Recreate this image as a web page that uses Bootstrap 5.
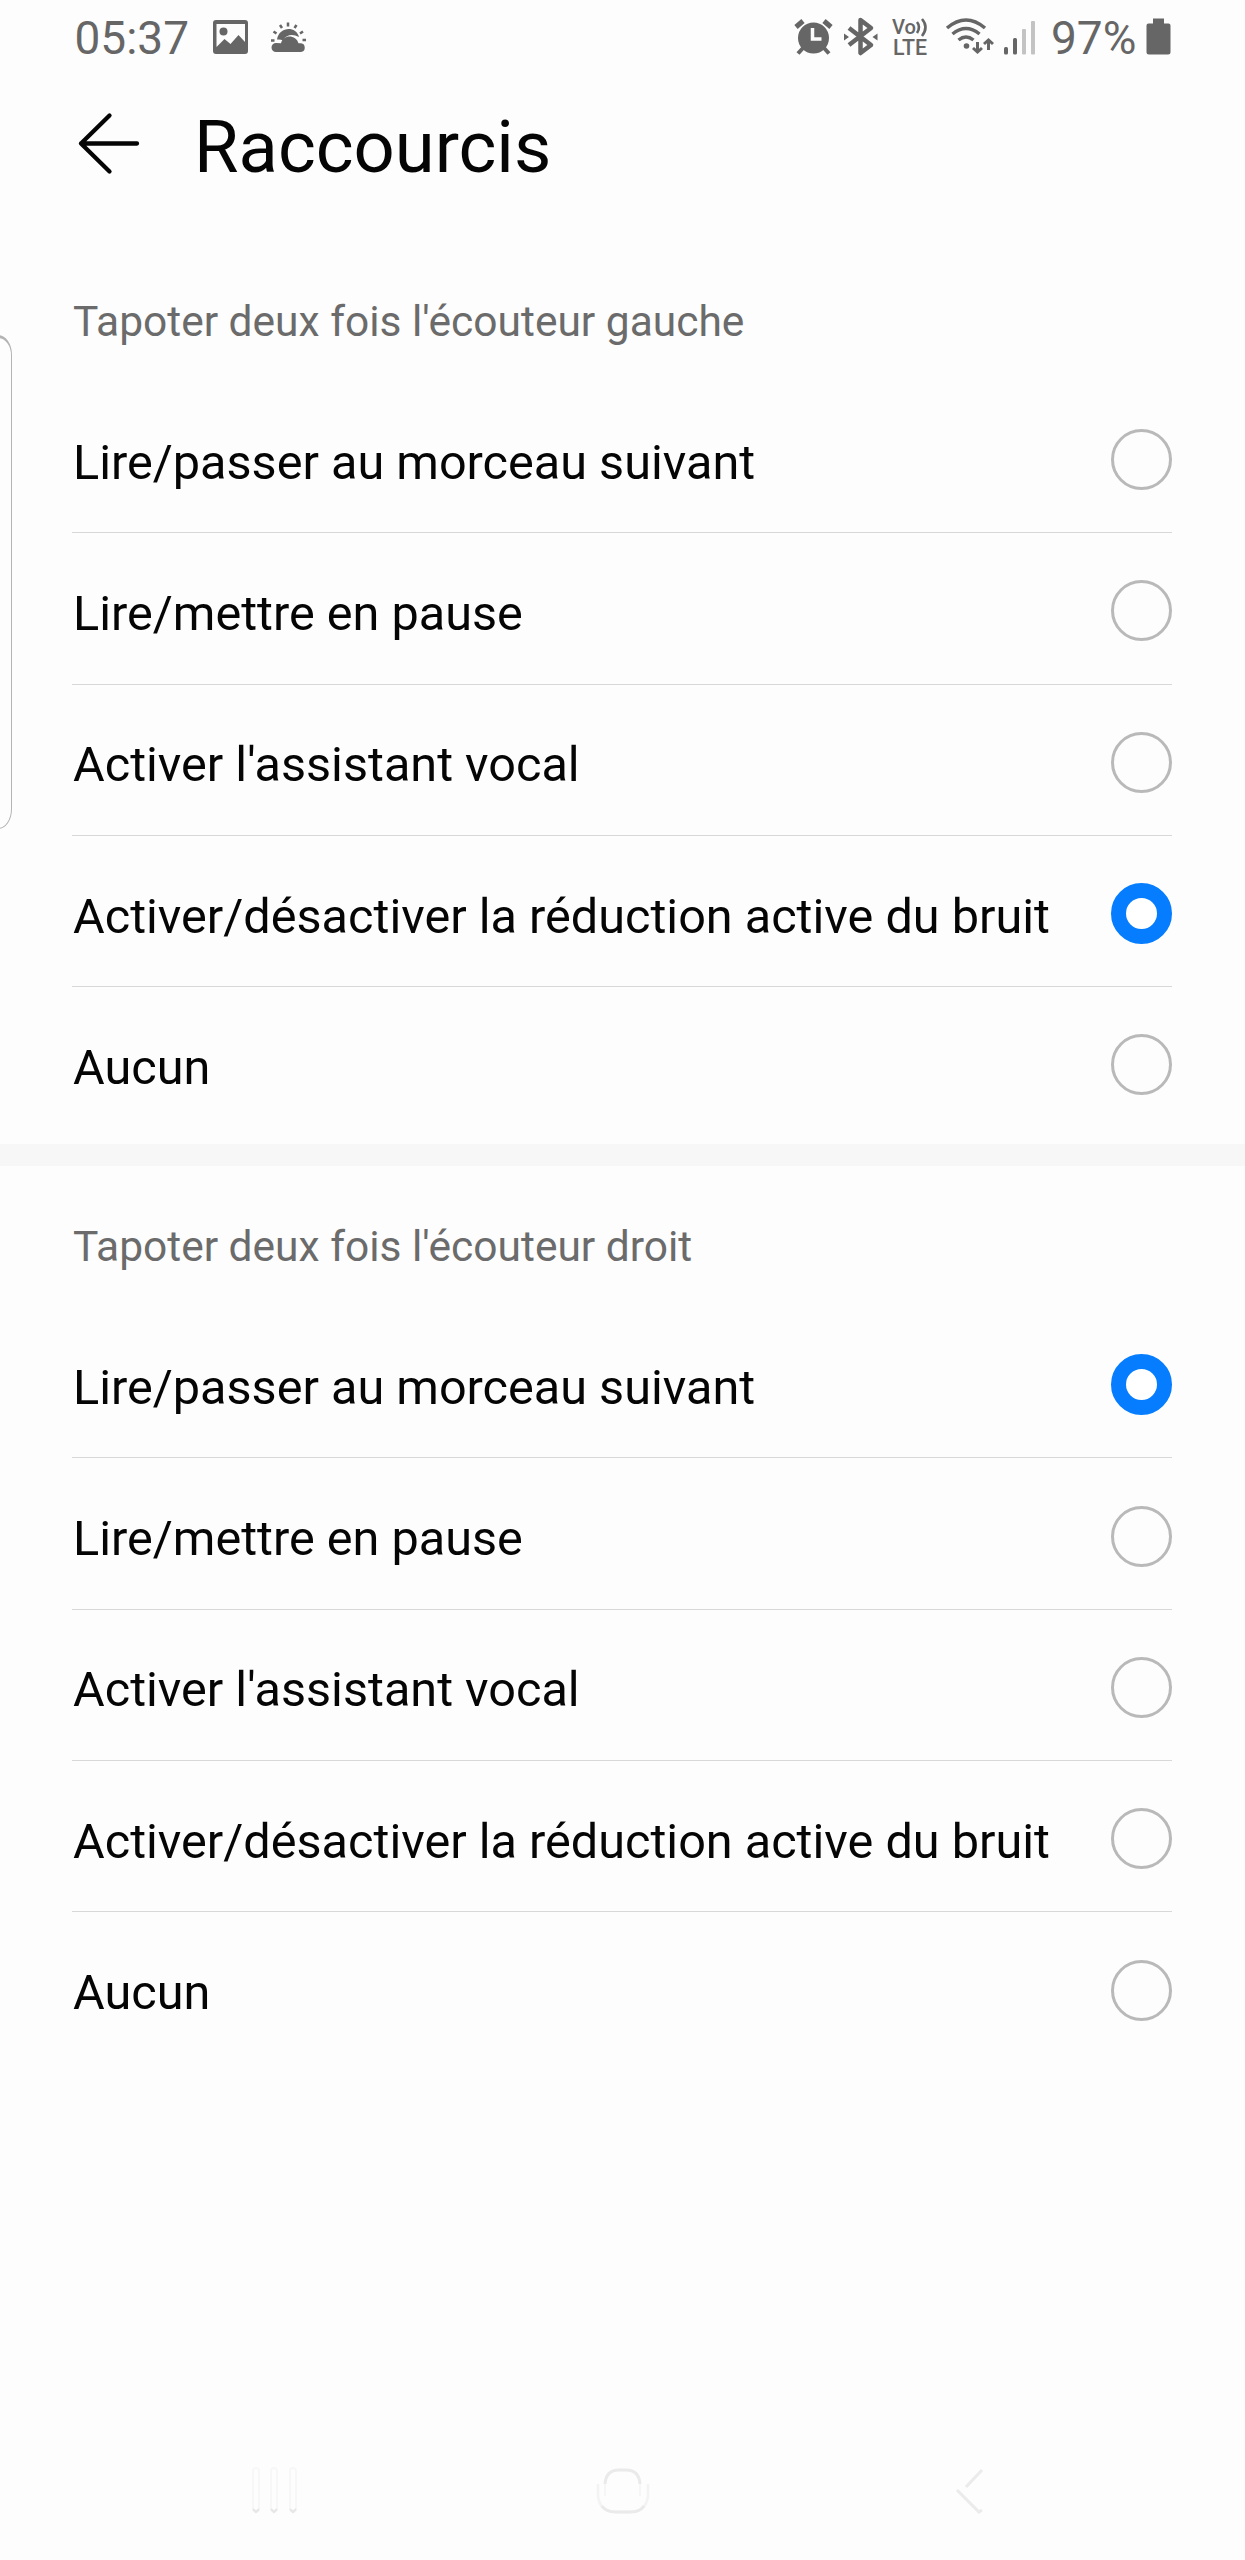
<!DOCTYPE html>
<html lang="fr">
<head>
<meta charset="utf-8">
<meta name="viewport" content="width=device-width, initial-scale=1">
<title>Raccourcis</title>
<link href="https://cdn.jsdelivr.net/npm/bootstrap@5.3.0/dist/css/bootstrap.min.css" rel="stylesheet">
<style>
body{background:#fdfdfd;color:#050505;font-family:Roboto,"Noto Sans",sans-serif;font-size:48.6px;line-height:60px}
.screen{width:1245px;height:2560px}
.side-panel{left:-30px;top:335px;width:42px;height:494px;border:1.5px solid #b4b4b4;border-top-width:3px;border-radius:14px/20px}
.status{height:76px;padding:0 73px;color:#666;font-size:46px}
.status svg,.title-bar svg,.nav-keys svg{display:block;flex:none}
.clock{width:135px;padding-left:1.5px}
.pct{width:95px;padding-left:1px}
.title-bar{height:140px;padding:0 73px 0 76px}
.title-bar svg{margin-top:34px}
.title-bar h1{font-size:72.3px;line-height:84px;font-weight:400;margin:30px 0 0 52px}
.group{padding:81px 73px 0 72px}
.group-right{padding-top:56px}
.group h2{font-size:42.5px;line-height:50px;font-weight:400;color:#6b6b6b;margin:0;padding-left:1px;height:85px}
.option{height:151.33px;padding-top:5px;border-bottom:1.5px solid #d8d8d8}
.option:last-child{border-bottom-color:transparent}
.option span{padding:6px 0 0 1px}
.option .form-check-input{width:61px;height:61px;margin:0;border:3px solid #b9b9b9;background:#fdfdfd;flex:none}
.option .form-check-input:checked{background:#fff;border:15px solid #057dfe}
.separator-band{height:22px;background:#f7f7f7;margin-top:5.5px}
.nav-keys{height:140px}
</style>
<script src="https://cdn.jsdelivr.net/npm/bootstrap@5.3.0/dist/js/bootstrap.bundle.min.js"></script>
</head>
<body>
<main class="screen position-relative overflow-hidden d-flex flex-column">
  <div class="side-panel position-absolute"></div>
  <header class="status d-flex align-items-center">
    <span class="clock">05:37</span>
    <svg width="60" height="76" viewBox="208 0 60 76" fill="#666"><path fill-rule="evenodd" d="M216 20h29a3 3 0 0 1 3 3v28a3 3 0 0 1-3 3h-29a3 3 0 0 1-3-3V23a3 3 0 0 1 3-3zM216.500 24v23l8-8 6 5 8-9 6.500 7V24z"/><circle cx="223.500" cy="31.500" r="4"/></svg>
    <svg width="50" height="76" viewBox="268 0 50 76" fill="#666"><path d="M276 52a4.500 4.500 0 0 1 0-9q3 0 5 .3c2-9 15-9 17.500 0h2.500a4.400 4.400 0 0 1 0 8.700z"/><path d="M277 39.500c2-13 19-14 22-2.500-6-3-12-3-16 3.200-2-.8-4-.9-6-.7z"/><path d="M271 40.500h3.500M273.500 31.500l3 2M280 25l2 3M288 22.500v4M296.500 25l-2 3M303 31.500l-3 2M302.500 40h3.500" fill="none" stroke="#666" stroke-width="2.500"/></svg>
    <div class="d-flex ms-auto align-items-center">
      <svg width="48" height="76" viewBox="792 0 48 76"><circle cx="813.500" cy="38" r="15.500" fill="#666"/><path d="M796 27l7-6M824 21l7 6" stroke="#666" stroke-width="5"/><path d="M803 48l-5 5.500M824 48l5 5.500" stroke="#666" stroke-width="4"/><path d="M812.500 28v11h9" fill="none" stroke="#fdfdfd" stroke-width="3.500"/></svg>
      <svg width="48" height="76" viewBox="840 0 48 76"><path d="M849 28l22 17-10.500 8V20L871 28 849 45" fill="none" stroke="#666" stroke-width="4.500" stroke-linejoin="round"/><path d="M844 33.500l5 3.500-5 3.500zM877.500 33.500l-5 3.500 5 3.500z" fill="#666"/></svg>
      <svg width="52" height="76" viewBox="888 0 52 76" fill="#666" font-family="Roboto,sans-serif"><text x="892" y="34" font-size="20" textLength="24" lengthAdjust="spacingAndGlyphs" font-weight="500">Vo</text><text x="893" y="54.500" font-size="21.500" textLength="34" lengthAdjust="spacingAndGlyphs" font-weight="500">LTE</text><path d="M917 22q4 5 0 11M922 19q7 8 0 17" fill="none" stroke="#666" stroke-width="2.600"/></svg>
      <svg width="58" height="76" viewBox="940 0 58 76" fill="none" stroke="#666" stroke-width="3.500"><path d="M947 28q19-16 38 0M952.500 34q13.500-11 27 0M958.500 40q7.500-6 15 0"/><circle cx="966.500" cy="46" r="2.800" fill="#666" stroke="none"/><path d="M977.500 42v9M988.500 50v-9" stroke-width="3"/><path d="M973 48l4.500 4 4.500-4M984 44l4.500-4 4.500 4" stroke-width="3"/></svg>
      <svg width="52" height="76" viewBox="998 0 52 76" fill="#666"><rect x="1004" y="47" width="4" height="7.500" rx="1.500"/><rect x="1013" y="38" width="4" height="16.500" rx="1.500"/><g fill="#c3c3c3"><rect x="1022" y="29" width="4" height="25.500" rx="1"/><rect x="1031" y="21" width="4" height="33.500" rx="1"/></g></svg>
      <span class="pct">97%</span>
      <svg width="27" height="76" viewBox="1145 0 27 76" fill="#666"><path d="M1153 18.500h11v5h4.500a2 2 0 0 1 2 2V52a2.500 2.500 0 0 1-2.500 2.500h-19a2.500 2.500 0 0 1-2.500-2.500V25.500a2 2 0 0 1 2-2h4.500z"/></svg>
    </div>
  </header>
  <div class="title-bar d-flex align-items-start">
    <svg width="66" height="66" viewBox="76 110 66 66" fill="none" stroke="#050505" stroke-width="4.300" stroke-linecap="round" stroke-linejoin="round"><path d="M109.500 115.500L81 143.500l28.500 28M81 143.500h56"/></svg>
    <h1>Raccourcis</h1>
  </div>
  <section class="group">
    <h2>Tapoter deux fois l'écouteur gauche</h2>
    <div>
      <label class="option d-flex align-items-center justify-content-between"><span>Lire/passer au morceau suivant</span><input class="form-check-input" type="radio" name="left"></label>
      <label class="option d-flex align-items-center justify-content-between"><span>Lire/mettre en pause</span><input class="form-check-input" type="radio" name="left"></label>
      <label class="option d-flex align-items-center justify-content-between"><span>Activer l'assistant vocal</span><input class="form-check-input" type="radio" name="left"></label>
      <label class="option d-flex align-items-center justify-content-between"><span>Activer/désactiver la réduction active du bruit</span><input class="form-check-input" type="radio" name="left" checked></label>
      <label class="option d-flex align-items-center justify-content-between"><span>Aucun</span><input class="form-check-input" type="radio" name="left"></label>
    </div>
  </section>
  <div class="separator-band"></div>
  <section class="group group-right">
    <h2>Tapoter deux fois l'écouteur droit</h2>
    <div>
      <label class="option d-flex align-items-center justify-content-between"><span>Lire/passer au morceau suivant</span><input class="form-check-input" type="radio" name="right" checked></label>
      <label class="option d-flex align-items-center justify-content-between"><span>Lire/mettre en pause</span><input class="form-check-input" type="radio" name="right"></label>
      <label class="option d-flex align-items-center justify-content-between"><span>Activer l'assistant vocal</span><input class="form-check-input" type="radio" name="right"></label>
      <label class="option d-flex align-items-center justify-content-between"><span>Activer/désactiver la réduction active du bruit</span><input class="form-check-input" type="radio" name="right"></label>
      <label class="option d-flex align-items-center justify-content-between"><span>Aucun</span><input class="form-check-input" type="radio" name="right"></label>
    </div>
  </section>
  <nav class="nav-keys mt-auto d-flex justify-content-between">
    <svg width="415" height="140" viewBox="0 2420 415 140" fill="none" stroke="#f7f7f7" stroke-width="2"><rect x="253" y="2468" width="6" height="44" rx="3"/><rect x="271" y="2468" width="6" height="44" rx="3"/><rect x="290" y="2468" width="6" height="44" rx="3"/><path d="M253 2509l3 3 3-3M271 2509l3 3 3-3M290 2509l3 3 3-3" stroke="#e6e6e6"/></svg>
    <svg width="415" height="140" viewBox="415 2420 415 140" fill="none"><path d="M605 2484q1-14 14-14h7q13 0 14 14" stroke="#eaeaea" stroke-width="3"/><path d="M605 2484v12M640 2484v12" stroke="#f6f6f6" stroke-width="2"/><path d="M598 2484v12q2 16 18 16h14q16 0 18-16v-12" stroke="#f3f3f3" stroke-width="2.500"/><path d="M602 2506q4 6 14 6h14q10 0 14-6" stroke="#eaeaea" stroke-width="3"/></svg>
    <svg width="415" height="140" viewBox="830 2420 415 140" fill="none" stroke="#ebebeb" stroke-width="3"><path d="M982 2470l-16 17M957 2490l22 22 3-2"/></svg>
  </nav>
</main>
</body>
</html>
